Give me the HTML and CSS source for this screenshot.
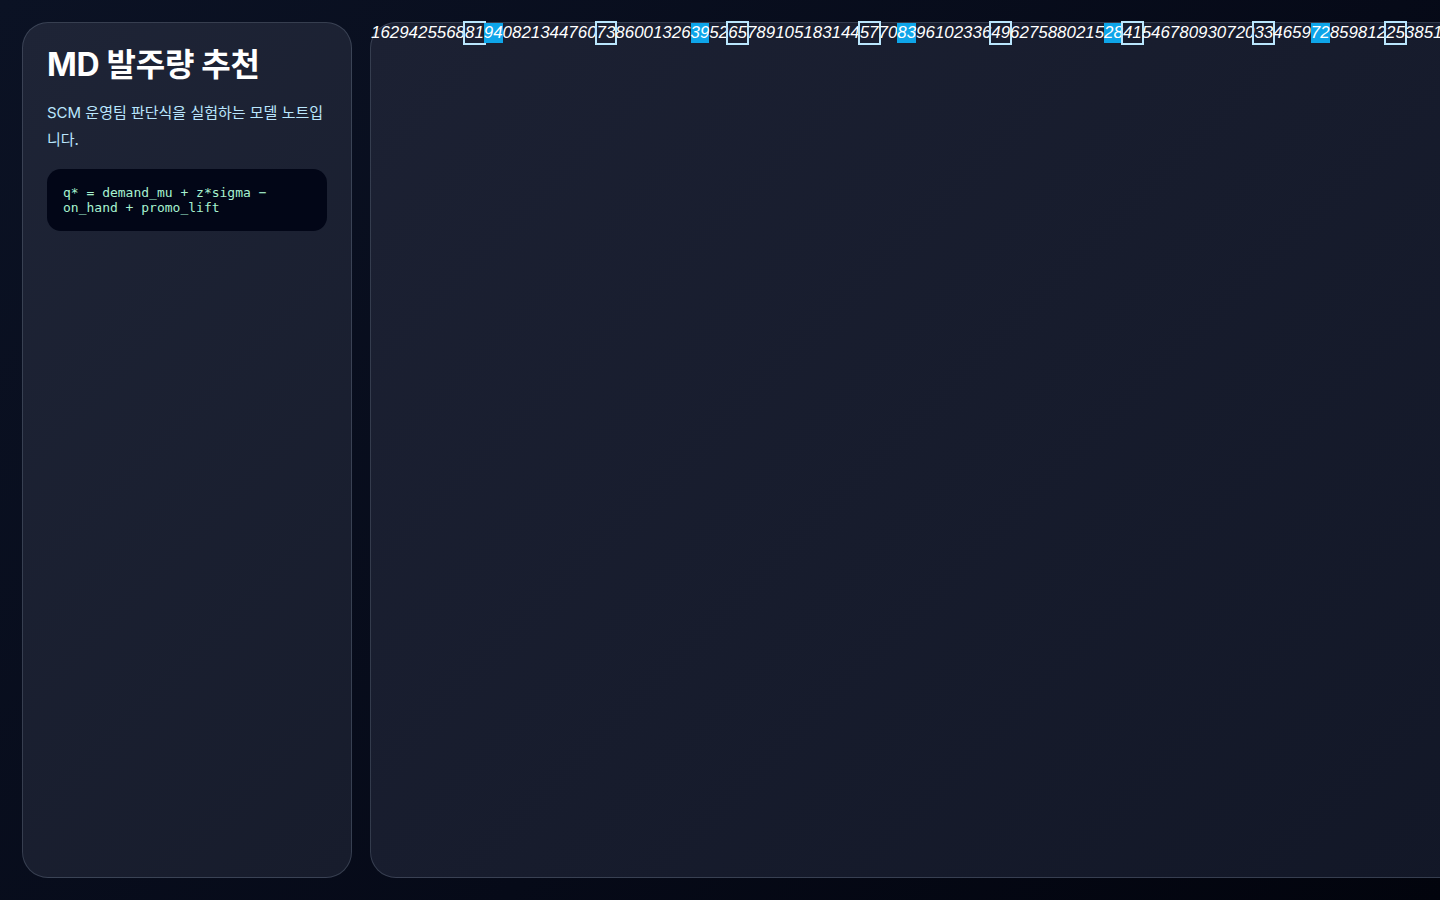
FILE: index.html
```html
<!DOCTYPE html>
<html lang="ko">
<head>
  <meta charset="UTF-8">
  <meta name="viewport" content="width=device-width, initial-scale=1.0">
  <title>MD 발주량 추천</title>
  <link rel="stylesheet" href="styles.css">
</head>
<body>
  <aside class="side">
    <h1>MD 발주량 추천</h1>
    <p class="lead">SCM 운영팀 판단식을 실험하는 모델 노트입니다.</p>
    <pre class="formula">q* = demand_mu + z*sigma − on_hand + promo_lift</pre>
  </aside>
  <main class="board">
    <div class="strip">
      <span>16</span><span>29</span><span>42</span><span>55</span><span>68</span><span class="mark">81</span><span class="hot">94</span><span>08</span><span>21</span><span>34</span>
      <span>47</span><span>60</span><span class="mark">73</span><span>86</span><span>00</span><span>13</span><span>26</span><span class="hot">39</span><span>52</span><span class="mark">65</span>
      <span>78</span><span>91</span><span>05</span><span>18</span><span>31</span><span>44</span><span class="mark">57</span><span>70</span><span class="hot">83</span><span>96</span>
      <span>10</span><span>23</span><span>36</span><span class="mark">49</span><span>62</span><span>75</span><span>88</span><span>02</span><span>15</span><span class="hot">28</span>
      <span class="mark">41</span><span>54</span><span>67</span><span>80</span><span>93</span><span>07</span><span>20</span><span class="mark">33</span><span>46</span><span>59</span>
      <span class="hot">72</span><span>85</span><span>98</span><span>12</span><span class="mark">25</span><span>38</span><span>51</span><span>64</span><span>77</span><span>90</span>
    </div>
  </main>
</body>
</html>
```

FILE: styles.css
```css
html {
  overflow: hidden;
}
body {
  margin: 0;
  padding: 22px;
  height: 100vh;
  box-sizing: border-box;
  display: grid;
  grid-template-columns: 330px 1fr;
  gap: 18px;
  background: linear-gradient(135deg, #0b1224 0%, #060a18 60%, #02040d 100%);
  font-family: Inter, "Noto Sans CJK KR", sans-serif;
  color: #fff;
}
.side {
  border: 1px solid rgba(148, 163, 184, 0.25);
  border-radius: 26px;
  background: linear-gradient(135deg, #1e2436, #171c2c);
  padding: 22px 24px;
}
.side h1 {
  margin: 0;
  font-size: 32px;
  font-weight: 700;
  line-height: 40px;
  letter-spacing: -0.3px;
}
.lead {
  margin: 14px 0 0;
  font-size: 15px;
  line-height: 27px;
  color: #bae6fd;
}
.formula {
  margin: 16px 0 0;
  padding: 16px;
  border-radius: 14px;
  background: #020617;
  color: #a7f3d0;
  font-family: "DejaVu Sans Mono", monospace;
  font-size: 13px;
  line-height: 15px;
  white-space: pre-wrap;
}
.board {
  border: 1px solid rgba(148, 163, 184, 0.25);
  border-radius: 26px;
  background: linear-gradient(135deg, #1c2133, #121727);
}
.strip {
  display: flex;
  white-space: nowrap;
  font-family: "Liberation Sans", Arial, sans-serif;
  font-style: italic;
  font-size: 16.9px;
  line-height: 20px;
}
.strip span {
  display: inline-block;
}
.strip .mark {
  outline: 2px solid #bae6fd;
}
.strip .hot {
  background: #0ea5e9;
}
```
